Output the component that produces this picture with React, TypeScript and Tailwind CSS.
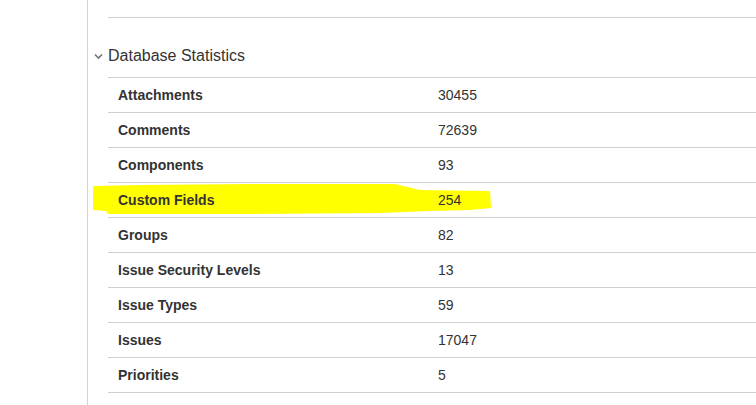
import React from 'react';

const stats: [string, string][] = [
  ['Attachments', '30455'],
  ['Comments', '72639'],
  ['Components', '93'],
  ['Custom Fields', '254'],
  ['Groups', '82'],
  ['Issue Security Levels', '13'],
  ['Issue Types', '59'],
  ['Issues', '17047'],
  ['Priorities', '5'],
];

function Highlight() {
  // hand-drawn marker stroke over the "Custom Fields" row
  return (
    <svg
      className="pointer-events-none absolute left-0 top-0"
      width="756"
      height="405"
      viewBox="0 0 756 405"
    >
      <path
        d="M93,186 L140,185 L250,184 L395,184 L420,190 L490,191 L491,208 L470,210 L430,211 L380,213 L250,214 L108,214 L106,211 L93,210 Z"
        fill="#ffff00"
      />
    </svg>
  );
}

export default function App() {
  return (
    <div
      className="relative flex h-[405px] w-[756px] overflow-hidden bg-white text-[#333]"
      style={{ fontFamily: '"Liberation Sans", Arial, sans-serif' }}
    >
      <Highlight />
      <div className="w-[88px] shrink-0 border-r border-[#d4d4d4]" />
      <div className="relative flex-1 pl-[20px]">
        <div className="h-[18px] border-b border-[#cfcfcf]" />
        <div className="mt-[28px] mb-[11px] -ml-[14px] flex items-center gap-[5px] text-[16px] leading-[20px]">
          <svg width="9" height="7" viewBox="0 0 9 7" className="mt-[1px]">
            <path d="M1 1.5 L4.5 5 L8 1.5" fill="none" stroke="#777" strokeWidth="1.7" />
          </svg>
          <span>Database Statistics</span>
        </div>
        <div className="border-t border-[#cfcfcf]">
          {stats.map(([label, value]) => (
            <div
              key={label}
              className="relative flex h-[35px] items-center border-b border-[#cfcfcf] text-[14px]"
            >
              <div className="w-[320px] pl-[10px] font-bold">{label}</div>
              <div className="pl-[10px]">{value}</div>
            </div>
          ))}
        </div>
      </div>
    </div>
  );
}
